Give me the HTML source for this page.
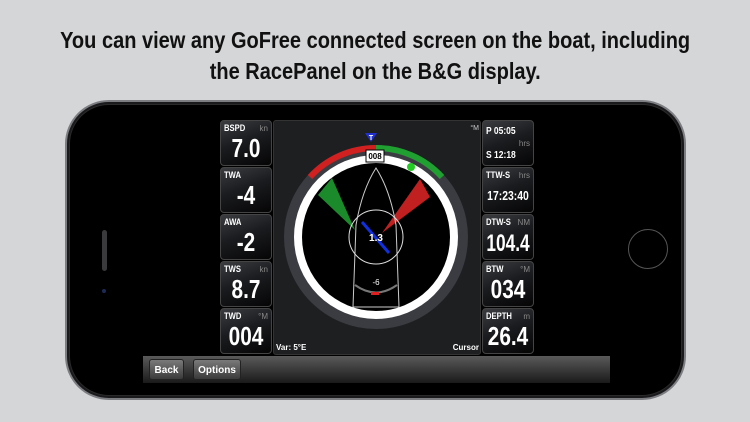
<!DOCTYPE html>
<html><head><meta charset="utf-8"><style>
*{margin:0;padding:0;box-sizing:border-box}
body{width:750px;height:422px;background:#d5d6d8;position:relative;overflow:hidden;font-family:"Liberation Sans",sans-serif}
.t{position:absolute;left:0;width:750px;text-align:center;font-weight:bold;font-size:23px;color:#111;white-space:nowrap}
.t span{display:inline-block;transform:scaleX(.87);transform-origin:center}
.phone{position:absolute;left:65px;top:100px;width:621px;height:300px;border-radius:44px;background:#1a1a1c;border:2px solid #7d7e82}
.bez{position:absolute;left:69px;top:104px;width:613px;height:292px;border-radius:40px;background:#000;border:1px solid #2a2a2a}
.tile{position:absolute;width:52px;height:46px;border-radius:4px;background:linear-gradient(160deg,#3a3c40 0%,#1b1c1f 45%,#050506 100%);border:1px solid #444;color:#fff;overflow:hidden}
.tile .l{position:absolute;left:3px;top:2px;font-size:9px;font-weight:bold;transform:scaleX(.85);transform-origin:left}
.tile .u{position:absolute;right:3px;top:3px;font-size:8px;color:#888}
.tile .v{position:absolute;left:-10px;right:-10px;bottom:1px;text-align:center;font-size:26px;font-weight:bold;transform:scaleX(.8)}
.btn{position:absolute;top:359px;height:21px;border-radius:3px;background:linear-gradient(#7a7a7a,#3a3a3a);color:#fff;font-size:10px;font-weight:bold;text-align:center;line-height:21px;border:1px solid #222}
</style></head><body>
<div class="t" style="top:27px"><span>You can view any GoFree connected screen on the boat, including</span></div>
<div class="t" style="top:58px"><span>the RacePanel on the B&amp;G display.</span></div>
<div class="phone"></div>
<div class="bez"></div>
<div style="position:absolute;left:102px;top:230px;width:5px;height:41px;border-radius:3px;background:#3a3a3c"></div>
<div style="position:absolute;left:102px;top:289px;width:4px;height:4px;border-radius:50%;background:#1c2a55"></div>
<div style="position:absolute;left:628px;top:229px;width:40px;height:40px;border-radius:50%;border:1px solid #555"></div>
<div style="position:absolute;left:143px;top:118px;width:467px;height:265px;background:#000"></div>
<div style="position:absolute;left:143px;top:356px;width:467px;height:27px;background:linear-gradient(#5a5a5a,#1a1a1a)"></div>
<div class="btn" style="left:149px;width:35px">Back</div>
<div class="btn" style="left:193px;width:48px">Options</div>
<div style="position:absolute;left:273px;top:120px;width:208px;height:235px;background:#1e1f21;border:1px solid #333;border-radius:3px"></div>
<svg style="position:absolute;left:273px;top:120px" width="208" height="235" viewBox="273 120 208 235">
<circle cx="376" cy="237" r="92" fill="#3a3c42"/>
<circle cx="376" cy="237" r="82" fill="#fff"/>
<circle cx="376" cy="237" r="74" fill="#000"/>
<path d="M376 148 A89 89 0 0 0 310 177" stroke="#d02020" stroke-width="6" fill="none"/>
<path d="M376 148 A89 89 0 0 1 442 177" stroke="#20a030" stroke-width="6" fill="none"/>
<polygon points="318,195 332,178 355,230" fill="#1a8a2a"/>
<polygon points="420,179 430,197 382,233" fill="#c02020"/>
<path d="M376 168 Q390 190 396 225 L399 307 L353 307 L356 225 Q362 190 376 168 Z" fill="none" stroke="#ccc" stroke-width="1"/>
<circle cx="376" cy="237" r="27" fill="none" stroke="#ddd" stroke-width="1"/>
<line x1="362" y1="222" x2="389" y2="253" stroke="#1030e0" stroke-width="3"/>
<text x="376" y="241" fill="#fff" font-size="10" font-weight="bold" text-anchor="middle">1.3</text>
<path d="M355 285 Q376 300 397 285" stroke="#777" stroke-width="2" fill="none"/>
<rect x="371" y="292" width="8" height="3" fill="#e02020"/>
<text x="376" y="285" fill="#fff" font-size="8" text-anchor="middle">-6</text>
<rect x="366" y="150" width="18" height="12" fill="#fff" stroke="#000"/>
<text x="375" y="159" font-size="8" font-weight="bold" text-anchor="middle">008</text>
<polygon points="365,133 377,133 371,142" fill="#2030d0"/>
<text x="371" y="140" fill="#fff" font-size="7" font-weight="bold" text-anchor="middle">T</text>
<circle cx="411" cy="167" r="4" fill="#2c2"/>
<text x="276" y="350" fill="#fff" font-size="8" font-weight="bold">Var: 5°E</text>
<text x="479" y="350" fill="#fff" font-size="8" font-weight="bold" text-anchor="end">Cursor</text>
<text x="479" y="130" fill="#ccc" font-size="7" text-anchor="end">°M</text>
</svg>
<div class="tile" style="left:220px;top:120px"><div class="l">BSPD</div><div class="u">kn</div><div class="v">7.0</div></div>
<div class="tile" style="left:220px;top:167px"><div class="l">TWA</div><div class="v">-4</div></div>
<div class="tile" style="left:220px;top:214px"><div class="l">AWA</div><div class="v">-2</div></div>
<div class="tile" style="left:220px;top:261px"><div class="l">TWS</div><div class="u">kn</div><div class="v">8.7</div></div>
<div class="tile" style="left:220px;top:308px"><div class="l">TWD</div><div class="u">°M</div><div class="v">004</div></div>
<div class="tile" style="left:482px;top:120px"><div class="l" style="font-size:10px;top:5px">P 05:05</div><div class="u" style="top:18px">hrs</div><div class="l" style="font-size:10px;top:29px">S 12:18</div></div>
<div class="tile" style="left:482px;top:167px"><div class="l">TTW-S</div><div class="u">hrs</div><div class="v" style="font-size:13px;bottom:9px">17:23:40</div></div>
<div class="tile" style="left:482px;top:214px"><div class="l">DTW-S</div><div class="u">NM</div><div class="v" style="font-size:24px;transform:scaleX(.72)">104.4</div></div>
<div class="tile" style="left:482px;top:261px"><div class="l">BTW</div><div class="u">°M</div><div class="v">034</div></div>
<div class="tile" style="left:482px;top:308px"><div class="l">DEPTH</div><div class="u">m</div><div class="v">26.4</div></div>
</body></html>
